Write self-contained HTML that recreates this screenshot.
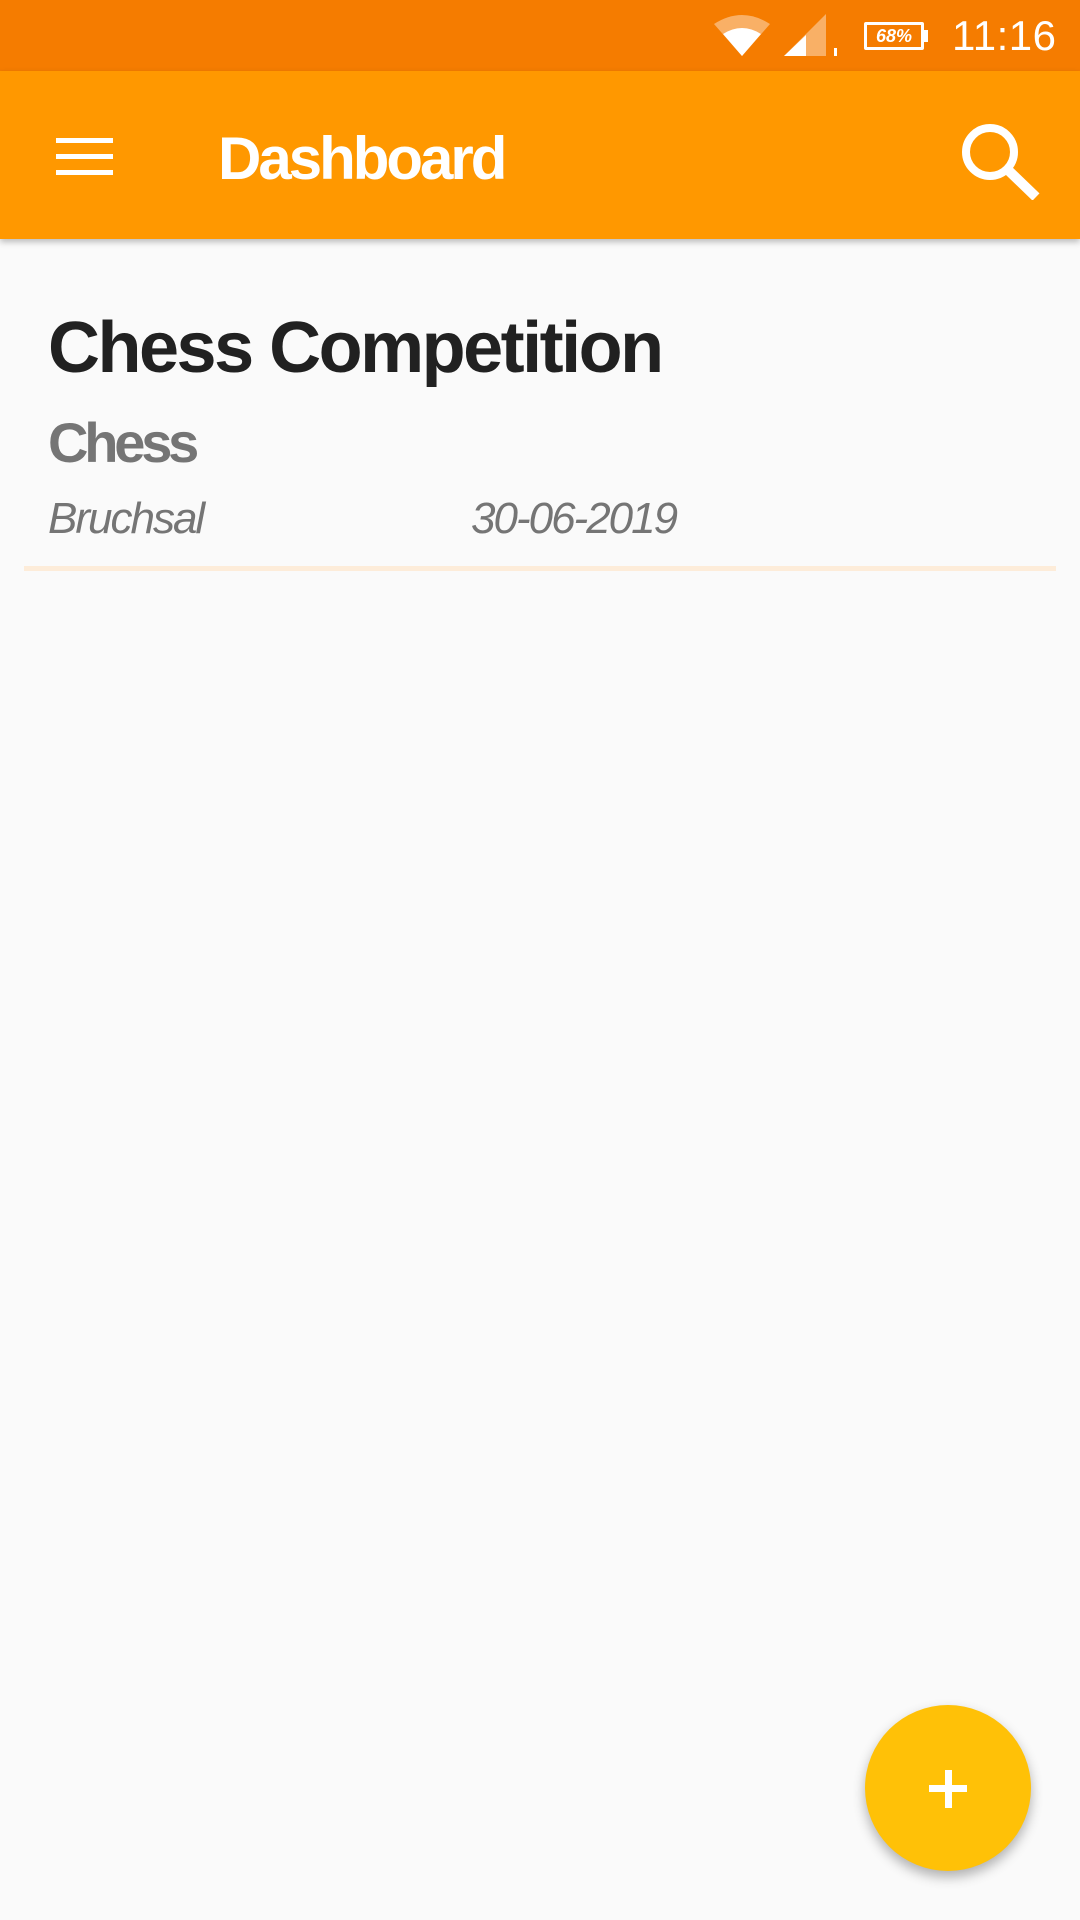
<!DOCTYPE html>
<html><head><meta charset="utf-8"><style>
*{margin:0;padding:0;box-sizing:border-box}
body{width:1080px;height:1920px;background:#fafafa;position:relative;overflow:hidden;font-family:"Liberation Sans",sans-serif}
.t{position:absolute;line-height:1;white-space:nowrap}
</style></head><body>
<div style="position:absolute;left:0;top:0;width:1080px;height:71px;background:#F57C00"></div>
<div style="position:absolute;left:0;top:71px;width:1080px;height:168px;background:#FF9800;box-shadow:0 3px 6px rgba(0,0,0,0.25)"></div>
<svg style="position:absolute;left:714px;top:14px" width="56" height="44" viewBox="0 0 56 44"><path d="M0 10 Q28 -8 56 10 L28 42 Z" fill="#fff" opacity="0.4"/><path d="M9 20 Q28 8 47 20 L28 42 Z" fill="#fff"/></svg>
<svg style="position:absolute;left:784px;top:14px" width="56" height="44" viewBox="0 0 56 44"><path d="M42 0 L42 42 L0 42 Z" fill="#fff" opacity="0.4"/><path d="M22 21 L22 42 L0 42 Z" fill="#fff"/><rect x="50" y="34" width="3" height="8" fill="#fff"/></svg>
<div style="position:absolute;left:864px;top:22px;width:60px;height:28px;border:3px solid #fff;border-radius:2px;color:#fff;font:bold 18px 'Liberation Sans';font-style:italic;text-align:center;line-height:22px">68%</div>
<div style="position:absolute;left:924px;top:30px;width:4px;height:12px;background:#fff"></div>
<div class="t" style="left:952px;top:15px;font-size:42px;color:#fff;letter-spacing:0.5px">11:16</div>
<div style="position:absolute;left:56px;top:138px;width:57px;height:5px;background:#fff"></div>
<div style="position:absolute;left:56px;top:154px;width:57px;height:5px;background:#fff"></div>
<div style="position:absolute;left:56px;top:170px;width:57px;height:5px;background:#fff"></div>
<div class="t" style="left:218px;top:129px;font-size:60px;font-weight:bold;color:#fff;letter-spacing:-3px">Dashboard</div>
<svg style="position:absolute;left:958px;top:120px" width="84" height="80" viewBox="0 0 84 80"><circle cx="32" cy="32" r="24" fill="none" stroke="#fff" stroke-width="8"/><path d="M49 49 L78 77" stroke="#fff" stroke-width="10"/></svg>
<div class="t" style="left:48px;top:312px;font-size:72px;font-weight:bold;color:#212121;letter-spacing:-2.5px">Chess Competition</div>
<div class="t" style="left:48px;top:415px;font-size:56px;font-weight:bold;color:#757575;letter-spacing:-4.2px">Chess</div>
<div class="t" style="left:48px;top:497px;font-size:44px;font-style:italic;color:#757575;letter-spacing:-2px">Bruchsal</div>
<div class="t" style="left:471px;top:497px;font-size:44px;font-style:italic;color:#757575;letter-spacing:-2px">30-06-2019</div>
<div style="position:absolute;left:24px;top:566px;width:1032px;height:5px;background:#fdecd9"></div>
<div style="position:absolute;left:865px;top:1705px;width:166px;height:166px;border-radius:50%;background:#FFC107;box-shadow:0 6px 12px rgba(0,0,0,0.3)"></div>
<div style="position:absolute;left:929px;top:1785px;width:38px;height:7px;background:#fff"></div>
<div style="position:absolute;left:944.5px;top:1769.5px;width:7px;height:38px;background:#fff"></div>
</body></html>
